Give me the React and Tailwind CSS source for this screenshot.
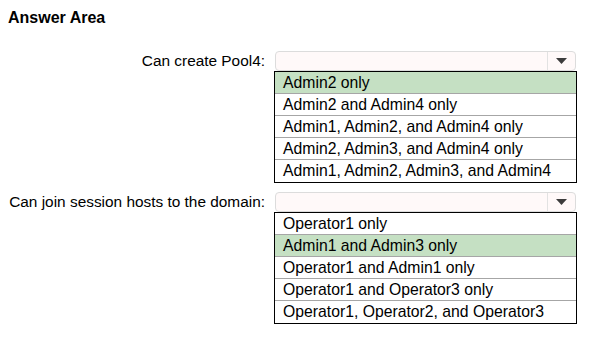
import React from "react";

const questions = [
  {
    id: 1,
    label: "Can create Pool4:",
    options: [
      "Admin2 only",
      "Admin2 and Admin4 only",
      "Admin1, Admin2, and Admin4 only",
      "Admin2, Admin3, and Admin4 only",
      "Admin1, Admin2, Admin3, and Admin4",
    ],
    selected: 0,
  },
  {
    id: 2,
    label: "Can join session hosts to the domain:",
    options: [
      "Operator1 only",
      "Admin1 and Admin3 only",
      "Operator1 and Admin1 only",
      "Operator1 and Operator3 only",
      "Operator1, Operator2, and Operator3",
    ],
    selected: 1,
  },
];

function Dropdown({ options, selected }) {
  return (
    <div className="w-[303px]">
      <div className="ml-px flex h-[20px] w-[301px] items-stretch rounded-[4px] border border-[#dcdcdc] bg-[#fff9f9]">
        <div className="flex-1" />
        <div className="flex w-[28px] items-center justify-center border-l border-[#e2e2e2]">
          <svg width="11" height="6" viewBox="0 0 11 6">
            <path d="M0 0 L11 0 L5.5 6 Z" fill="#3c3c3c" />
          </svg>
        </div>
      </div>
      <ul className="border border-black bg-white text-[15.75px]">
        {options.map((opt, i) => (
          <li
            key={opt}
            className={`h-[22px] pl-[8px] leading-[21px] ${
              i < options.length - 1 ? "border-b border-[#a6a6a6]" : ""
            } ${i === selected ? "bg-[#c5e0c3]" : ""}`}
          >
            {opt}
          </li>
        ))}
      </ul>
    </div>
  );
}

export default function App() {
  return (
    <div className="min-h-screen bg-white pt-[8px] pl-[8px] text-black font-['Liberation_Sans',Arial,sans-serif]">
      <h1 className="text-[16px] font-bold leading-[20px]">Answer Area</h1>
      <div className="mt-[23px] flex flex-col gap-[9px] text-[15.4px]">
        {questions.map((q) => (
          <div key={q.id} className="flex items-start">
            <div className="flex w-[258px] shrink-0 justify-end whitespace-nowrap pr-[1px] leading-[19px]">
              <span>{q.label}</span>
            </div>
            <div className="ml-[8px]">
              <Dropdown options={q.options} selected={q.selected} />
            </div>
          </div>
        ))}
      </div>
    </div>
  );
}
